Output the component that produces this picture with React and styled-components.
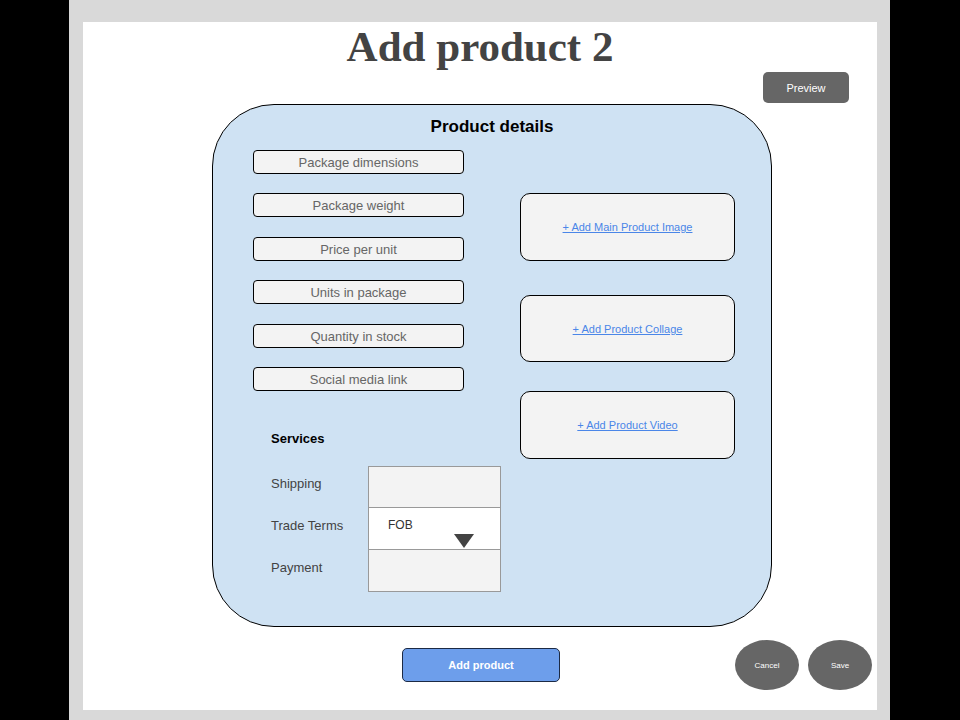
import React from 'react';
import styled, { createGlobalStyle } from 'styled-components';

const GlobalStyle = createGlobalStyle`
    html, body {
        margin: 0;
        padding: 0;
        background: #000;
        font-family: "Liberation Sans", Arial, sans-serif;
    }
`;

const Frame = styled.div`
    width: 821px;
    height: 720px;
    margin-left: 69px;
    background: #d9d9d9;
    padding: 22px 13px 10px 14px;
    box-sizing: border-box;
`;

const Canvas = styled.div`
    height: 100%;
    background: #fff;
    display: flex;
    flex-direction: column;
`;

const Title = styled.h1`
    margin: 0;
    height: 50px;
    line-height: 50px;
    text-align: center;
    font-family: "Liberation Serif", "Times New Roman", serif;
    font-weight: bold;
    font-size: 43px;
    color: #434343;
`;

const TopBar = styled.div`
    display: flex;
    justify-content: flex-end;
    padding-right: 28px;
`;

const DarkButton = styled.button`
    width: 86px;
    height: 31px;
    border: none;
    border-radius: 5px;
    background: #666;
    color: #fff;
    font-family: "Liberation Sans", Arial, sans-serif;
    font-size: 11px;
    padding: 0;
`;

const Panel = styled.section`
    width: 560px;
    height: 523px;
    margin: 1px 0 0 129px;
    box-sizing: border-box;
    border: 1px solid #000;
    border-radius: 62px;
    background: #cfe2f3;
    padding-top: 12px;
`;

const PanelTitle = styled.h2`
    margin: 0 0 13px 0;
    height: 20px;
    line-height: 20px;
    font-size: 17px;
    font-weight: bold;
    color: #000;
    text-align: center;
`;

const Columns = styled.div`
    display: grid;
    grid-template-columns: 247px 215px;
    column-gap: 20px;
    padding-left: 40px;
`;

const LeftColumn = styled.div`
    display: flex;
    flex-direction: column;
`;

const FieldList = styled.div`
    display: flex;
    flex-direction: column;
    gap: 19.4px;
`;

const Field = styled.div`
    width: 211px;
    height: 24px;
    box-sizing: border-box;
    border: 1px solid #000;
    border-radius: 4px;
    background: #f3f3f3;
    color: #666;
    font-size: 13px;
    line-height: 24px;
    text-align: center;
`;

const ServicesTitle = styled.h3`
    margin: 39px 0 0 18px;
    height: 18px;
    line-height: 18px;
    font-size: 13px;
    font-weight: bold;
    color: #000;
`;

const ServicesGrid = styled.div`
    margin: 18px 0 0 18px;
    display: grid;
    grid-template-columns: 97px 133px;
`;

const ServiceLabel = styled.div`
    height: 42px;
    line-height: 36px;
    font-size: 13px;
    color: #434343;
`;

const ServiceCell = styled.div`
    position: relative;
    height: 42px;
    box-sizing: border-box;
    border: 1px solid #999;
    border-top: ${p => (p.$first ? '1px solid #999' : 'none')};
    background: ${p => (p.$white ? '#fff' : '#f3f3f3')};
    font-size: 12px;
    color: #333;
    padding: 10px 0 0 19px;
`;

const Caret = styled.span`
    position: absolute;
    left: 85px;
    top: 26px;
    width: 0;
    height: 0;
    border-left: 10px solid transparent;
    border-right: 10px solid transparent;
    border-top: 14px solid #434343;
`;

const RightColumn = styled.div`
    display: flex;
    flex-direction: column;
    padding-top: 43px;
`;

const MediaBox = styled.div`
    margin-top: ${p => p.$gap}px;
    width: 215px;
    height: ${p => p.$h}px;
    box-sizing: border-box;
    border: 1px solid #000;
    border-radius: 10px;
    background: #f3f3f3;
    display: flex;
    align-items: center;
    justify-content: center;
`;

const MediaLink = styled.a`
    font-size: 11px;
    color: #4a86e8;
    text-decoration: underline;
`;

const BottomBar = styled.div`
    margin-top: 13px;
    height: 50px;
    display: flex;
    align-items: center;
    gap: 9px;
`;

const PrimaryButton = styled.button`
    flex: none;
    margin: 0 166px 0 319px;
    width: 158px;
    height: 34px;
    box-sizing: border-box;
    border: 1px solid #1c2a44;
    border-radius: 5px;
    background: #6d9eeb;
    color: #fff;
    font-family: "Liberation Sans", Arial, sans-serif;
    font-weight: bold;
    font-size: 11px;
`;

const RoundButton = styled.button`
    flex: none;
    width: 64px;
    height: 50px;
    border: none;
    border-radius: 50%;
    background: #666;
    color: #fff;
    font-family: "Liberation Sans", Arial, sans-serif;
    font-size: 8px;
    padding: 0;
`;

const fields = [
    'Package dimensions',
    'Package weight',
    'Price per unit',
    'Units in package',
    'Quantity in stock',
    'Social media link',
];

const media = [
    { label: '+ Add Main Product Image', gap: 0, h: 68 },
    { label: '+ Add Product Collage', gap: 34, h: 67 },
    { label: '+ Add Product Video', gap: 29, h: 68 },
];

function App() {
    return (
        <>
            <GlobalStyle />
            <Frame>
                <Canvas>
                    <Title>Add product 2</Title>
                    <TopBar>
                        <DarkButton>Preview</DarkButton>
                    </TopBar>
                    <Panel>
                        <PanelTitle>Product details</PanelTitle>
                        <Columns>
                            <LeftColumn>
                                <FieldList>
                                    {fields.map(f => (
                                        <Field key={f}>{f}</Field>
                                    ))}
                                </FieldList>
                                <ServicesTitle>Services</ServicesTitle>
                                <ServicesGrid>
                                    <ServiceLabel>Shipping</ServiceLabel>
                                    <ServiceCell $first />
                                    <ServiceLabel>Trade Terms</ServiceLabel>
                                    <ServiceCell $white>
                                        FOB
                                        <Caret />
                                    </ServiceCell>
                                    <ServiceLabel>Payment</ServiceLabel>
                                    <ServiceCell />
                                </ServicesGrid>
                            </LeftColumn>
                            <RightColumn>
                                {media.map(m => (
                                    <MediaBox key={m.label} $gap={m.gap} $h={m.h}>
                                        <MediaLink href="#">{m.label}</MediaLink>
                                    </MediaBox>
                                ))}
                            </RightColumn>
                        </Columns>
                    </Panel>
                    <BottomBar>
                        <PrimaryButton>Add product</PrimaryButton>
                        <RoundButton>Cancel</RoundButton>
                        <RoundButton>Save</RoundButton>
                    </BottomBar>
                </Canvas>
            </Frame>
        </>
    );
}

export default App;
